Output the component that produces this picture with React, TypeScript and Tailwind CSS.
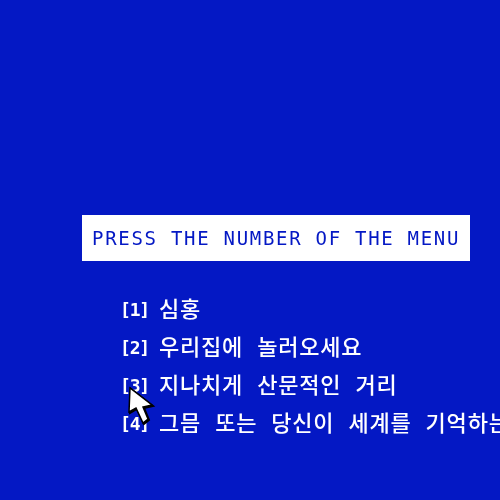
const menu = [
  { key: '[1]', label: '심홍' },
  { key: '[2]', label: '우리집에 놀러오세요' },
  { key: '[3]', label: '지나치게 산문적인 거리' },
  { key: '[4]', label: '그믐 또는 당신이 세계를 기억하는' },
];

export default function App() {
  return (
    <div className="relative h-[500px] w-[500px] overflow-hidden bg-[#0418c4] pt-[215px] font-['DejaVu_Sans_Mono','Noto_Sans_CJK_KR',monospace]">
      <div className="ml-[82px] flex h-[46px] w-[388px] items-center whitespace-nowrap bg-white pl-[10px] text-[19px] font-medium tracking-[1.71px] text-[#0418c4] [filter:blur(0.4px)]">
        PRESS THE NUMBER OF THE MENU
      </div>
      <ul className="ml-[120px] mt-[35px] flex flex-col gap-[11px] whitespace-nowrap text-[22px] font-medium leading-[27px] tracking-[0.8px] text-white [filter:blur(0.4px)]">
        {menu.map((item) => (
          <li key={item.key} className="flex items-center">
            <span className="w-[39px] shrink-0 text-[18px] font-bold tracking-[-1.2px]">{item.key}</span>
            <span>{item.label}</span>
          </li>
        ))}
      </ul>
      <svg className="absolute left-[125px] top-[384px] [filter:blur(0.5px)]" width="32" height="44" viewBox="0 0 32 44">
        <path d="M6 5 L5 29 L12 25 L19 40 L24 36 L19 24 L28 22 Z" fill="#000000" stroke="#000000" strokeWidth="2" />
        <path
          d="M5 4 L4 28 L11 24 L18 39 L23 35 L18 23 L27 21 Z"
          fill="#ffffff"
          stroke="#000000"
          strokeWidth="1.5"
          strokeLinejoin="miter"
        />
      </svg>
    </div>
  );
}
